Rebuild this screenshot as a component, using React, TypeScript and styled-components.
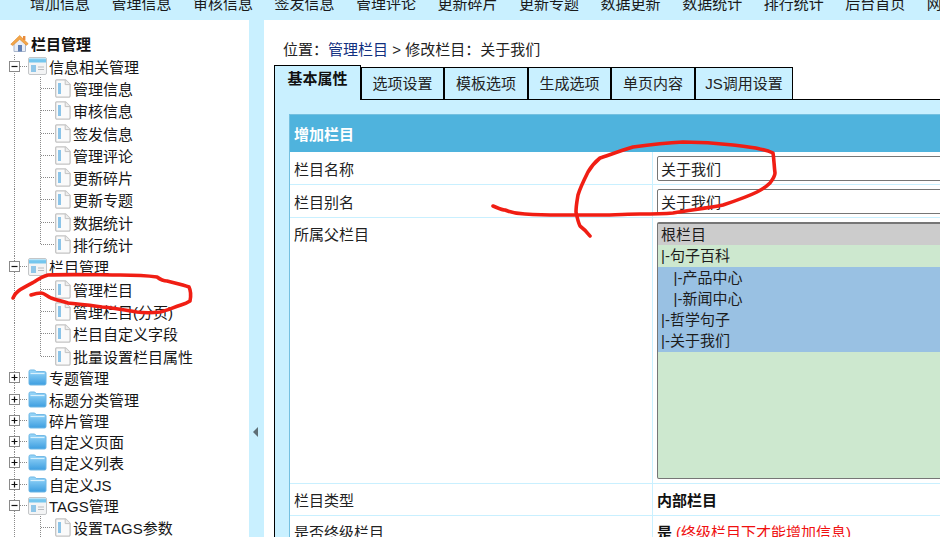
import React from "react";
import styled, { createGlobalStyle, css } from "styled-components";

const Global = createGlobalStyle`
  html, body { margin: 0; padding: 0; background: #c9f0ff; }
  body { font-family: "Liberation Sans", "Noto Sans CJK SC", sans-serif; font-size: 15px; color: #1a1a1a; }
  * { box-sizing: border-box; }
`;

const Page = styled.div`
  position: relative;
  width: 940px;
  height: 537px;
  overflow: hidden;
  background: #c9f0ff;
  display: flex;
  flex-direction: column;
`;

const TopNav = styled.nav`
  height: 20px;
  flex: none;
  display: flex;
  align-items: flex-end;
  gap: 21.5px;
  padding: 0 0 6px 30px;
  overflow: hidden;
  white-space: nowrap;
`;
const NavItem = styled.span`
  height: 20px;
  line-height: 20px;
  flex: none;
`;

const Body = styled.div`
  flex: 1;
  min-height: 0;
  display: flex;
`;

const Sidebar = styled.aside`
  width: 249px;
  flex: none;
  background: #fff;
  padding-top: 12px;
  overflow: hidden;
`;

const Splitter = styled.div`
  width: 15px;
  flex: none;
  display: flex;
  align-items: flex-start;
  padding: 407px 0 0 4px;
`;
const Arrow = styled.span`
  width: 0;
  height: 0;
  border-style: solid;
  border-width: 5px 5px 5px 0;
  border-color: transparent #5f6f76 transparent transparent;
`;

const RootRow = styled.div`
  height: 23px;
  display: flex;
  align-items: center;
  gap: 2px;
  padding-left: 10px;
  font-weight: 700;
  color: #111;
`;

const dotsV = "repeating-linear-gradient(to bottom, #8a8a8a 0 1px, transparent 1px 2px)";
const dotsH = "repeating-linear-gradient(to right, #8a8a8a 0 1px, transparent 1px 2px)";

const Row = styled.div<{ $h: number }>`
  height: ${(p) => p.$h}px;
  display: flex;
  align-items: center;
  white-space: nowrap;
`;

const Stem = styled.div<{ $branch?: boolean }>`
  flex: none;
  height: 100%;
  display: flex;
  align-items: center;
  width: ${(p) => (p.$branch ? 28 : 40)}px;
  background-repeat: no-repeat;
  ${(p) =>
    p.$branch
      ? css`
          padding-left: 9px;
          background-image: ${dotsV}, ${dotsH};
          background-size: 1px 100%, 8px 1px;
          background-position: 14px 0, 20px 50%;
        `
      : css`
          background-image: ${dotsV};
          background-size: 1px 100%;
          background-position: 14px 0;
        `}
`;

const Branch = styled.div<{ $last?: boolean }>`
  flex: none;
  width: 15px;
  height: 100%;
  background-repeat: no-repeat;
  background-image: ${dotsV}, ${dotsH};
  background-size: 1px ${(p) => (p.$last ? "50%" : "100%")}, 14px 1px;
  background-position: 0 0, 1px 50%;
`;

const Toggle = styled.span`
  width: 11px;
  height: 11px;
  flex: none;
  display: block;
`;

const Label = styled.span<{ $leaf?: boolean }>`
  margin-left: ${(p) => (p.$leaf ? 2 : 2)}px;
  color: #161616;
`;

const Main = styled.main`
  flex: 1;
  min-width: 0;
  background: #fff;
  padding: 20px 0 0 10px;
  display: flex;
  flex-direction: column;
`;

const Crumb = styled.div`
  height: 20px;
  line-height: 20px;
  padding-left: 9px;
  margin-bottom: 6px;
  white-space: pre;
  color: #222;
`;
const CrumbLink = styled.span`
  color: #12307f;
`;

const TabBar = styled.div`
  height: 34px;
  flex: none;
  display: flex;
  align-items: flex-end;
  border-bottom: 1px solid #000;
`;
const Tab = styled.div<{ $active?: boolean; $w: number }>`
  flex: none;
  width: ${(p) => p.$w}px;
  text-align: center;
  background: #c9f0ff;
  border: 1px solid #000;
  white-space: nowrap;
  ${(p) =>
    p.$active
      ? css`
          height: 35px;
          line-height: 26px;
          font-weight: 700;
          border-bottom: 0;
          margin-bottom: -1px;
          position: relative;
          color: #111;
        `
      : css`
          height: 32px;
          line-height: 31px;
          border-bottom: 0;
          color: #222;
        `}
`;

const Panel = styled.div`
  flex: 1;
  min-height: 0;
  background: #c9f0ff;
  border-left: 1px solid #000;
  padding: 14px 0 0 14px;
  overflow: hidden;
`;

const Table = styled.div`
  width: 900px;
  border: 1px solid #74c0e0;
  border-bottom: 0;
  background: #fff;
`;
const Heading = styled.div`
  height: 37px;
  line-height: 39px;
  background: #4fb3dd;
  color: #fff;
  font-weight: 700;
  padding-left: 4px;
`;
const FormRow = styled.div<{ $h: number }>`
  height: ${(p) => p.$h}px;
  display: grid;
  grid-template-columns: 363px 1fr;
  border-bottom: 1px solid #c9f0ff;
`;
const Name = styled.div<{ $top?: boolean }>`
  border-right: 1px solid #c9f0ff;
  padding-left: 4px;
  color: #222;
  display: flex;
  align-items: ${(p) => (p.$top ? "flex-start" : "center")};
  padding-top: ${(p) => (p.$top ? "5px" : "0")};
`;
const Value = styled.div`
  padding-left: 4px;
  display: flex;
  align-items: center;
  white-space: nowrap;
`;
const SelectCell = styled.div`
  padding: 4px 0 0 4px;
`;
const TextInput = styled.input`
  width: 500px;
  height: 25px;
  border: 1px solid #767676;
  border-radius: 2px;
  padding: 0 3px;
  font: inherit;
  color: #222;
  background: #fff;
`;
const ListBox = styled.div`
  width: 500px;
  height: 257px;
  background: #cde8cf;
  border: 1px solid #767676;
  border-top-width: 2px;
  border-radius: 2px;
  overflow: hidden;
`;
type Tone = "root" | "plain" | "picked";
const toneColor: Record<Tone, string> = { root: "#cccccc", plain: "#cde8cf", picked: "#99c1e3" };
const Option = styled.div<{ $tone: Tone }>`
  height: 21.3px;
  line-height: 21px;
  padding-left: 3px;
  white-space: pre;
  color: #1c1c1c;
  background: ${(p) => toneColor[p.$tone]};
`;
const Strong = styled.b`
  color: #111;
`;
const Note = styled.span`
  color: #f01010;
  margin-left: 4px;
`;

const Ink = styled.svg`
  position: absolute;
  left: 0;
  top: 0;
  pointer-events: none;
`;

const HomeIcon = () => (
  <svg width="19" height="19" viewBox="0 0 19 19">
    <path d="M4 9v8.5h11.5V9L10 4z" fill="#e9eef6" stroke="#a9b6cc" />
    <rect x="8" y="11" width="4" height="6.5" fill="#5f7fb5" />
    <path d="M0.8 10.2 9.7 1.5l8.5 8.2-1.8 1.6-6.7-6-7 6.2z" fill="#f4a649" stroke="#d98322" strokeWidth=".6" />
    <rect x="13" y="2" width="2.4" height="4" fill="#e98a3a" />
  </svg>
);

const PanelIcon = () => (
  <svg width="19" height="18" viewBox="0 0 19 18">
    <rect x=".5" y=".5" width="18" height="17" rx="1.5" fill="#f3f4f5" stroke="#c4c6c8" />
    <rect x="1" y="1" width="17" height="4.5" fill="#74c6ee" />
    <rect x="1" y="1" width="17" height="1.2" fill="#b9e4f8" />
    <rect x="3" y="8" width="5" height="7" fill="#8fc6e8" />
    <path d="M10 10h6M10 12.5h6" stroke="#b9bcc0" strokeWidth="1.2" />
  </svg>
);

const LeafIcon = () => (
  <svg width="16" height="19" viewBox="0 0 16 19">
    <path d="M1.5.8h9l4.6 4.6v11.4a1.4 1.4 0 0 1-1.4 1.4H1.5A1.2 1.2 0 0 1 .7 17V1.6A1 1 0 0 1 1.5.8z" fill="#fafafa" stroke="#c3c3c3" strokeWidth="1.3" />
    <path d="M10.2 1v4.6h4.8" fill="#eee" stroke="#c3c3c3" />
    <rect x="3" y="4" width="3" height="11" fill="#8cc4e8" />
  </svg>
);

const FolderIcon = () => (
  <svg width="19" height="17" viewBox="0 0 19 17">
    <defs>
      <linearGradient id="fold" x1="0" y1="0" x2="0" y2="1">
        <stop offset="0" stopColor="#9ad8fa" />
        <stop offset="1" stopColor="#3d9ee0" />
      </linearGradient>
    </defs>
    <path d="M1 2.5A1.5 1.5 0 0 1 2.5 1h4.2l1.5 1.6h8.3A1.5 1.5 0 0 1 18 4v10.5a1.5 1.5 0 0 1-1.5 1.5h-14A1.5 1.5 0 0 1 1 14.5z" fill="url(#fold)" stroke="#6db6e4" />
    <path d="M2.5 4.5h14" stroke="#d9f1fd" strokeWidth="1.2" />
  </svg>
);

const ToggleBox = ({ open }: { open: boolean }) => (
  <Toggle>
    <svg width="11" height="11" viewBox="0 0 11 11" style={{ display: "block" }}>
      <rect x=".5" y=".5" width="10" height="10" fill="#fff" stroke="#8a8a8a" />
      <path d={open ? "M2.5 5.5h6" : "M2.5 5.5h6M5.5 2.5v6"} stroke="#111" strokeWidth="1.2" />
    </svg>
  </Toggle>
);

const Leaf = ({ text, last }: { text: string; last?: boolean }) => (
  <Row $h={22.3}>
    <Stem />
    <Branch $last={last} />
    <LeafIcon />
    <Label $leaf>{text}</Label>
  </Row>
);

const Group = ({ text, open, h = 22.3 }: { text: string; open: boolean; h?: number }) => (
  <Row $h={h}>
    <Stem $branch>
      <ToggleBox open={open} />
    </Stem>
    {open ? <PanelIcon /> : <FolderIcon />}
    <Label>{text}</Label>
  </Row>
);

const navItems = ["增加信息", "管理信息", "审核信息", "签发信息", "管理评论", "更新碎片", "更新专题", "数据更新", "数据统计", "排行统计", "后台首页", "网站首页"];
const infoLeaves = ["管理信息", "审核信息", "签发信息", "管理评论", "更新碎片", "更新专题", "数据统计", "排行统计"];
const columnLeaves = ["管理栏目", "管理栏目(分页)", "栏目自定义字段", "批量设置栏目属性"];
const closedGroups = ["专题管理", "标题分类管理", "碎片管理", "自定义页面", "自定义列表", "自定义JS"];
const tabs = [
  { t: "基本属性", w: 87, a: true },
  { t: "选项设置", w: 83 },
  { t: "模板选项", w: 84 },
  { t: "生成选项", w: 83 },
  { t: "单页内容", w: 84 },
  { t: "JS调用设置", w: 98 },
];
const options: { t: string; tone: Tone }[] = [
  { t: "根栏目", tone: "root" },
  { t: "|-句子百科", tone: "plain" },
  { t: "\u00a0\u00a0\u00a0|-产品中心", tone: "picked" },
  { t: "\u00a0\u00a0\u00a0|-新闻中心", tone: "picked" },
  { t: "|-哲学句子", tone: "picked" },
  { t: "|-关于我们", tone: "picked" },
];

export default function App() {
  return (
    <Page>
      <Global />
      <TopNav>
        {navItems.map((n) => (
          <NavItem key={n}>{n}</NavItem>
        ))}
      </TopNav>
      <Body>
        <Sidebar>
          <RootRow>
            <HomeIcon />
            <span>栏目管理</span>
          </RootRow>
          <Group text="信息相关管理" open />
          {infoLeaves.map((l, i) => (
            <Leaf key={l} text={l} last={i === infoLeaves.length - 1} />
          ))}
          <Group text="栏目管理" open />
          {columnLeaves.map((l, i) => (
            <Leaf key={l} text={l} last={i === columnLeaves.length - 1} />
          ))}
          {closedGroups.map((g) => (
            <Group key={g} text={g} open={false} h={21.3} />
          ))}
          <Group text="TAGS管理" open h={21.3} />
          <Leaf text="设置TAGS参数" />
        </Sidebar>
        <Splitter>
          <Arrow />
        </Splitter>
        <Main>
          <Crumb>
            位置：<CrumbLink>管理栏目</CrumbLink> &gt; 修改栏目：关于我们
          </Crumb>
          <TabBar>
            {tabs.map((t) => (
              <Tab key={t.t} $active={t.a} $w={t.w}>
                {t.t}
              </Tab>
            ))}
          </TabBar>
          <Panel>
            <Table>
              <Heading>增加栏目</Heading>
              <FormRow $h={33}>
                <Name>栏目名称</Name>
                <Value>
                  <TextInput readOnly value="关于我们" />
                </Value>
              </FormRow>
              <FormRow $h={33}>
                <Name>栏目别名</Name>
                <Value>
                  <TextInput readOnly value="关于我们" />
                </Value>
              </FormRow>
              <FormRow $h={266}>
                <Name $top>所属父栏目</Name>
                <SelectCell>
                  <ListBox>
                    {options.map((o) => (
                      <Option key={o.t} $tone={o.tone}>
                        {o.t}
                      </Option>
                    ))}
                  </ListBox>
                </SelectCell>
              </FormRow>
              <FormRow $h={32}>
                <Name>栏目类型</Name>
                <Value>
                  <Strong>内部栏目</Strong>
                </Value>
              </FormRow>
              <FormRow $h={32}>
                <Name>是否终级栏目</Name>
                <Value>
                  <Strong>是</Strong>
                  <Note>(终级栏目下才能增加信息)</Note>
                </Value>
              </FormRow>
            </Table>
          </Panel>
        </Main>
      </Body>
      <Ink width="940" height="537" viewBox="0 0 940 537" fill="none" stroke="#f01e14" strokeWidth="3.6" strokeLinecap="round" strokeLinejoin="round">
        <path d="M13 298C15 292 19 290 34 282 40 278 44 276 48 275 70 274 102 275 120 275 135 275 150 276 157 277 161 280 165 281 167 281 175 283 184 285 189 287 191 291 191 296 190 301 187 303 184 304 181 305 172 308 166 311 160 312 152 313 144 313 137 312 125 310 114 308 102 307 90 305 78 304 68 303 62 301 56 300 51 298 47 296 44 293 41 293 37 293 34 294 31 295" />
        <path d="M493 206C498 208 502 210 505 210 512 213 518 214 525 214 540 215 550 215 560 215 575 215 588 215 600 215 615 215 628 214 640 214 652 214 662 214 673 213 690 210 708 208 723 205 735 201 747 197 757 192 763 189 767 186 770 183 773 179 775 176 775 173 774 165 774 159 773 153 769 151 765 150 760 149 752 147 742 146 733 145 716 143 700 142 683 142 665 143 648 145 633 147 620 151 609 155 600 158 595 162 591 167 588 172 584 180 580 188 578 195 577 201 576 206 576 212 577 217 578 222 580 226 584 229 587 232 590 236" />
      </Ink>
    </Page>
  );
}
